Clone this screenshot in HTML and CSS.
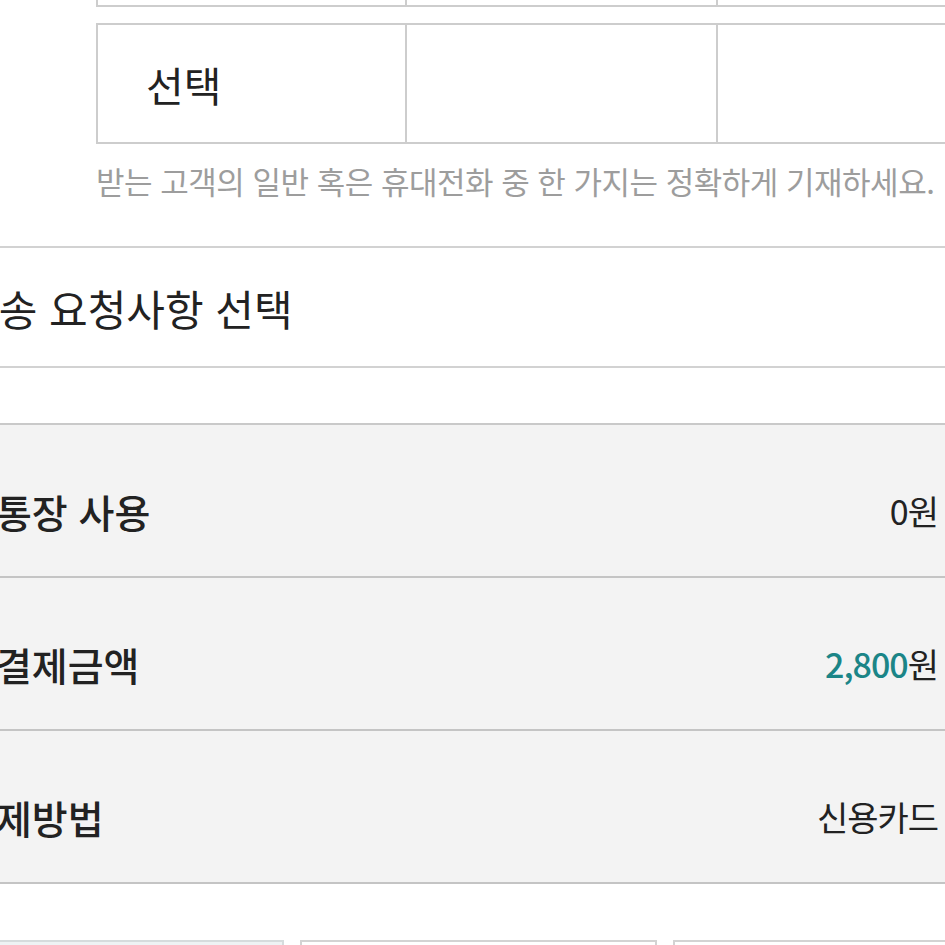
FILE: index.html
```html
<!DOCTYPE html>
<html lang="ko">
<head>
    <meta charset="UTF-8">
    <meta name="viewport" content="width=device-width, initial-scale=1.0">
    <title>주문서 작성</title>
    <link rel="stylesheet" href="styles.css">
</head>
<body>

    <div class="page">
        <div class="form-table cut">
            <div class="cell"></div>
            <div class="cell"></div>
            <div class="cell"></div>
        </div>

        <div class="form-table">
            <div class="cell label">선택</div>
            <div class="cell"></div>
            <div class="cell"></div>
        </div>
        <p class="hint">받는 고객의 일반 혹은 휴대전화 중 한 가지는 정확하게 기재하세요.</p>

        <div class="select-row">배송 요청사항 선택</div>

        <div class="summary">
            <div class="summary-row">
                <span class="summary-label">무통장 사용</span>
                <span class="summary-value">0원</span>
            </div>
            <div class="summary-row">
                <span class="summary-label">총결제금액</span>
                <span class="summary-value"><em class="price">2,800</em>원</span>
            </div>
            <div class="summary-row">
                <span class="summary-label">결제방법</span>
                <span class="summary-value">신용카드</span>
            </div>
        </div>

        <div class="buttons">
            <button class="btn active">이전</button>
            <button class="btn">취소</button>
            <button class="btn">결제하기</button>
        </div>
    </div>

</body>
</html>
```

FILE: styles.css
```css
html, body {
    margin: 0;
    height: 100%;
    overflow: hidden;
    background: #fff;
}
body {
    font-family: "Noto Sans CJK KR", "Noto Sans", sans-serif;
    color: #222;
}
.page {
    margin-left: -40px;
}
.form-table {
    display: grid;
    grid-template-columns: 307px 311px 311px;
    width: 935px;
    margin-left: 136px;
    border: 2px solid #cdcdcd;
    margin-top: 16px;
}
.form-table.cut {
    border-top: none;
    margin-top: 0;
}
.form-table.cut .cell {
    height: 5px;
}
.cell {
    height: 117px;
    border-left: 2px solid #cdcdcd;
}
.cell:first-child {
    border-left: none;
}
.cell.label {
    display: flex;
    align-items: center;
    padding-left: 48px;
    font-size: 41px;
}
.hint {
    margin: 17px 0 0 136px;
    font-size: 31px;
    line-height: 40px;
    letter-spacing: -0.5px;
    color: #9d9d9d;
    white-space: nowrap;
}
.select-row {
    margin-top: 45px;
    height: 118px;
    display: flex;
    align-items: center;
    border-top: 2px solid #d2d2d2;
    border-bottom: 2px solid #d2d2d2;
    font-size: 42px;
}
.summary {
    margin-top: 55px;
    background: #f3f3f3;
    border-top: 2px solid #c9c9c9;
}
.summary-row {
    height: 131px;
    padding: 20px 7px 0 0;
    display: flex;
    align-items: center;
    justify-content: space-between;
    border-bottom: 2px solid #c4c4c4;
}
.summary-label {
    font-size: 39px;
    font-weight: 500;
}
.summary-value {
    font-size: 34px;
    letter-spacing: -1px;
}
.price {
    font-style: normal;
    font-weight: 500;
    color: #1b8587;
}
.buttons {
    display: grid;
    grid-template-columns: 324px 357px 357px;
    gap: 16px;
    margin-top: 56px;
}
.btn {
    height: 60px;
    background: #fff;
    border: 2px solid #d3d3d3;
    font-family: inherit;
    font-size: 30px;
}
.btn.active {
    background: #eef3f4;
    border-color: #d6dcdd;
}
```
